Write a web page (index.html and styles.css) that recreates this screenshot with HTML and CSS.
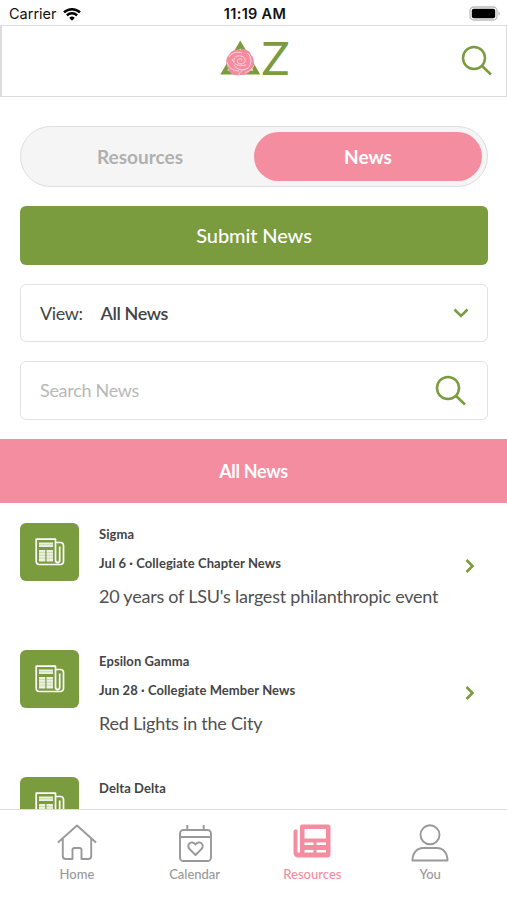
FILE: index.html
```html
<!DOCTYPE html>
<html lang="en">
<head>
    <meta charset="UTF-8">
    <meta name="viewport" content="width=device-width, initial-scale=1.0">
    <title>News</title>
    <link rel="stylesheet" href="styles.css">
</head>
<body>
    <!-- Shared icons -->
    <svg class="sprite" width="0" height="0">
        <symbol id="icon-search" viewBox="0 0 32 32">
            <circle cx="13" cy="13" r="11" fill="none" stroke="currentColor" stroke-width="2.5"/>
            <path d="M20.5 20.5L30 29.5" fill="none" stroke="currentColor" stroke-width="2.5"/>
        </symbol>
        <symbol id="icon-news" viewBox="0 0 30 28">
            <g fill="none" stroke="currentColor" stroke-width="1.7" stroke-linejoin="round">
                <path d="M20.5 22V1.2H1.2V23.5a3 3 0 0 0 3 3H25.5a3 3 0 0 0 3-3V7.5a3 3 0 0 0-3-3H20.5"/>
                <path d="M20.5 22a2 2.5 0 0 0 4.2 0V8.500"/>
            </g>
            <path d="M4 4.500h14v4.500H4zM4 12h6.300V23.500H4zM11.500 12h6.500V23.500h-6.500z" fill="currentColor" opacity="0.85"/>
            <path d="M4 6.700h14M4 14.500h14M4 17.300h14M4 20.100h14" stroke="#7b9b3f" stroke-width="0.5" opacity="0.5"/>
        </symbol>
        <symbol id="icon-chevron" viewBox="0 0 10 16">
            <path d="M1.500 2L7.500 8L1.500 14" fill="none" stroke="currentColor" stroke-width="2.6"/>
        </symbol>
    </svg>

    <div class="status-bar">
        <div class="carrier">
            <span>Carrier</span>
            <svg width="18" height="14" viewBox="0 0 18 14">
                <g fill="none" stroke="#000" stroke-width="2.500">
                    <path d="M1 5.400a11.500 11.500 0 0 1 16 0"/>
                    <path d="M3.900 8.400a7.300 7.300 0 0 1 10.200 0"/>
                </g>
                <path d="M6.200 10.800a4 4 0 0 1 5.600 0L9 13.700z"/>
            </svg>
        </div>
        <div class="time">11:19 AM</div>
        <div class="battery">
            <svg width="32" height="15" viewBox="0 0 32 15">
                <rect x="1" y="1" width="27" height="13" rx="3.800" fill="#fff" stroke="#bcbcbc" stroke-width="1.300"/>
                <rect x="2.800" y="2.800" width="23.400" height="9.400" rx="2" fill="#000"/>
                <path d="M29.500 5.500a2.300 2.300 0 0 1 0 4z" fill="#aaa"/>
            </svg>
        </div>
    </div>

    <header class="header">
        <svg class="logo" width="70" height="38" viewBox="0 0 70 38">
            <path d="M20.300 5.500L36.800 33.500H3.800z" fill="none" stroke="#7b9b3f" stroke-width="4"/>
            <path d="M20 10.500C26 9.500 30 12 31 16C35 19 34 26 32.500 28C31 33 27 36 20 36C13 37 9 34 8 29C5 25 6 18 9 16C11 12 14 10.500 20 10.500z" fill="#f48ca0"/>
            <g fill="none" stroke="#fbd5dc" stroke-width="1">
                <path d="M9 18c2-4 8-6 13-4M27 14c5 3 5 11 1 15c-5 4-12 1-14-3M7 23c1 6 7 9 12 9M19 36c1-4 4-5 6-6M34 26c-2 5-5 6-9 8"/>
                <path d="M14 23c-1-5 3-7 7-6c6 1 5 8 0 8c-4 0-5-4-2-5c3-1 4 1 2 2M12 20c2 5 6 8 14 6"/>
            </g>
            <text class="logo-letter" x="41.500" y="35.500" textLength="28" lengthAdjust="spacingAndGlyphs">Z</text>
        </svg>
        <svg class="header-search" width="32" height="32"><use href="#icon-search"/></svg>
    </header>

    <main class="content">
        <div class="controls">
            <div class="toggle">
                <div class="toggle-item">Resources</div>
                <div class="toggle-item active">News</div>
            </div>
            <button class="submit-btn">Submit News</button>
            <div class="field">
                <span class="field-label">View:</span>
                <span class="field-value">All News</span>
                <svg class="select-arrow" width="16" height="10" viewBox="0 0 16 10">
                    <path d="M1.500 1.500L8 8L14.500 1.500" fill="none" stroke="currentColor" stroke-width="2.500"/>
                </svg>
            </div>
            <div class="field search">
                <span class="placeholder">Search News</span>
                <svg class="search-icon" width="32" height="32"><use href="#icon-search"/></svg>
            </div>
        </div>

        <h2 class="section-title">All News</h2>

        <div class="news-list">
            <article class="news-item">
                <div class="thumb"><svg width="30" height="28"><use href="#icon-news"/></svg></div>
                <div class="news-text">
                    <div class="chapter">Sigma</div>
                    <div class="meta">Jul 6 · Collegiate Chapter News</div>
                    <div class="title">20 years of LSU's largest philanthropic event</div>
                </div>
                <svg class="chevron" width="10" height="16"><use href="#icon-chevron"/></svg>
            </article>
            <article class="news-item">
                <div class="thumb"><svg width="30" height="28"><use href="#icon-news"/></svg></div>
                <div class="news-text">
                    <div class="chapter">Epsilon Gamma</div>
                    <div class="meta">Jun 28 · Collegiate Member News</div>
                    <div class="title">Red Lights in the City</div>
                </div>
                <svg class="chevron" width="10" height="16"><use href="#icon-chevron"/></svg>
            </article>
            <article class="news-item">
                <div class="thumb"><svg width="30" height="28"><use href="#icon-news"/></svg></div>
                <div class="news-text">
                    <div class="chapter">Delta Delta</div>
                </div>
            </article>
        </div>
    </main>

    <nav class="tab-bar">
        <div class="tab">
            <svg width="40" height="38" viewBox="0 0 40 38">
                <path d="M1 18.500L20 1.500L39 18.500M5.800 14.500V32a3 3 0 0 0 3 3H15.500V26a2 2 0 0 1 2-2H22.500a2 2 0 0 1 2 2V35H31.200a3 3 0 0 0 3-3V14.500" fill="none" stroke="currentColor" stroke-width="1.900" stroke-linejoin="round"/>
            </svg>
            <span>Home</span>
        </div>
        <div class="tab">
            <svg width="40" height="38" viewBox="0 0 40 38">
                <g fill="none" stroke="currentColor" stroke-width="1.900">
                    <rect x="5" y="6" width="31" height="31" rx="3.500"/>
                    <path d="M5 13H36M12.300 1V6M28.700 1V6"/>
                    <path d="M20.500 31L14.500 25C10.500 20.500 17 15.500 20.500 20.500C24 15.500 30.500 20.500 26.500 25z" stroke-linejoin="round"/>
                </g>
            </svg>
            <span>Calendar</span>
        </div>
        <div class="tab active">
            <svg width="40" height="38" viewBox="0 0 40 38">
                <path fill="currentColor" fill-rule="evenodd" d="M10 0.500H36a2.500 2.500 0 0 1 2.500 2.500V30a3.500 3.500 0 0 1-3.500 3.500H6a4.500 4.500 0 0 1-4.500-4.500V7.500A2 2 0 0 1 3.500 5.500H5.500V28a1.500 1.500 0 0 0 2.500 0V2.500A2 2 0 0 1 10 0.500zM12.500 5V14.500H34V5zM12.500 18.500V21H21.500V18.500zM24.500 18.500V21H34V18.500zM12.500 26V28.500H21.500V26zM24.500 26V28.500H34V26z"/>
            </svg>
            <span>Resources</span>
        </div>
        <div class="tab">
            <svg width="40" height="38" viewBox="0 0 40 38">
                <g fill="none" stroke="currentColor" stroke-width="1.900" stroke-linejoin="round">
                    <circle cx="20" cy="10.800" r="9.500"/>
                    <path d="M2.500 36.500C2.500 29 7 24 13 24H27C33 24 37.500 29 37.500 36.500z"/>
                </g>
            </svg>
            <span>You</span>
        </div>
    </nav>
</body>
</html>
```
FILE: styles.css
```css
* {
    box-sizing: border-box;
}

body {
    font-family: Lato, sans-serif;
    background-color: #ffffff;
    color: #444444;
    margin: 0;
    height: 900px;
    display: flex;
    flex-direction: column;
    overflow: hidden;
}

svg {
    display: block;
    flex-shrink: 0;
}

.sprite {
    position: absolute;
}

/* Status bar */
.status-bar {
    height: 25px;
    flex-shrink: 0;
    display: grid;
    grid-template-columns: 1fr auto 1fr;
    align-items: center;
    padding: 2px 6px 0 9px;
    font-family: Inter, sans-serif;
    font-size: 14.5px;
    color: #111111;
}

.carrier {
    display: flex;
    align-items: center;
    gap: 6px;
}

.time {
    font-size: 14.5px;
    font-weight: 600;
    letter-spacing: 0.3px;
}

.battery {
    justify-self: end;
}

/* Header */
.header {
    height: 72px;
    flex-shrink: 0;
    display: grid;
    grid-template-columns: 1fr auto 1fr;
    align-items: center;
    padding-right: 14px;
    border: 1px solid #dddddd;
    border-left-width: 2px;
}

.logo {
    grid-column: 2;
    margin: 0 0 7px 15px;
    overflow: visible;
}

.logo-letter {
    font-size: 46px;
    fill: #7b9b3f;
}

.header-search {
    justify-self: end;
    margin-right: -1px;
    color: #7b9b3f;
}

/* Content */
.content {
    flex: 1;
    min-height: 0;
    overflow: hidden;
}

.controls {
    display: flex;
    flex-direction: column;
    gap: 19px;
    padding: 29px 19px 19px 20px;
}

.toggle {
    display: flex;
    height: 61px;
    padding: 5px;
    background-color: #f5f5f5;
    border: 1px solid #dedede;
    border-radius: 31px;
}

.toggle-item {
    flex: 1;
    display: flex;
    align-items: center;
    justify-content: center;
    border-radius: 25px;
    font-size: 19px;
    font-weight: bold;
    color: #b0b0b0;
}

.toggle-item.active {
    background-color: #f58da0;
    color: #ffffff;
}

.submit-btn {
    height: 59px;
    padding: 0 0 1px;
    border: none;
    border-radius: 6px;
    background-color: #7b9b3f;
    color: #ffffff;
    font-family: inherit;
    font-size: 20px;
    font-weight: 500;
    letter-spacing: -0.1px;
}

.field {
    height: 58px;
    display: flex;
    align-items: center;
    padding: 0 18px 0 19px;
    border: 1px solid #e2e2e2;
    border-radius: 6px;
    font-size: 18px;
    letter-spacing: -0.4px;
}

.search {
    height: 59px;
    padding-right: 20px;
}

.field-value {
    margin-left: 18px;
    font-weight: 600;
}

.placeholder {
    padding-bottom: 2px;
    letter-spacing: -0.3px;
    color: #b8b8b8;
}

.select-arrow,
.search-icon {
    margin-left: auto;
    color: #7b9b3f;
}

.section-title {
    height: 64px;
    margin: 0;
    display: flex;
    align-items: center;
    justify-content: center;
    background-color: #f58da0;
    color: #ffffff;
    font-size: 18px;
    font-weight: bold;
    letter-spacing: -0.3px;
}

/* News list */
.news-list {
    padding: 20px 32px 0 20px;
}

.news-item {
    height: 127px;
    display: flex;
}

.thumb {
    width: 59px;
    height: 58px;
    flex-shrink: 0;
    display: flex;
    align-items: center;
    justify-content: center;
    border-radius: 6px;
    background-color: #7b9b3f;
    color: #ffffff;
}

.news-text {
    flex: 1;
    margin-left: 20px;
    white-space: nowrap;
}

.chapter,
.meta {
    font-size: 13px;
    font-weight: bold;
    line-height: 22px;
    letter-spacing: 0.08px;
}

.meta {
    margin-top: 7px;
}

.title {
    margin-top: 8px;
    font-size: 18px;
    line-height: 28px;
    letter-spacing: -0.23px;
    color: #505050;
}

.chevron {
    margin-top: 35px;
    color: #7b9b3f;
}

/* Bottom tabs */
.tab-bar {
    height: 91px;
    flex-shrink: 0;
    display: flex;
    padding: 14px 18px 0;
    border-top: 1px solid #dddddd;
}

.tab {
    flex: 1;
    display: flex;
    flex-direction: column;
    align-items: center;
    gap: 4px;
    font-size: 13px;
    font-weight: 500;
    color: #999999;
}

.tab.active {
    color: #f58da0;
}
```
